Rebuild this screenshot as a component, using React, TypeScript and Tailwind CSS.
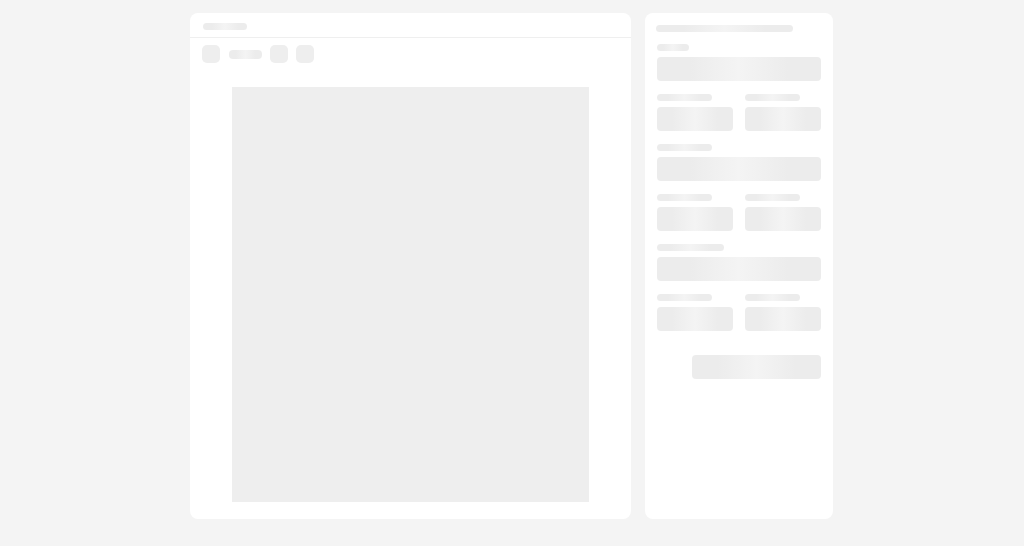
const shimmer =
  'rounded bg-[linear-gradient(90deg,#ececec_20%,#f4f4f4_50%,#ececec_80%)]';

function Bar({ className }: { className: string }) {
  return <div className={`${shimmer} shrink-0 ${className}`} />;
}

function Field({ label }: { label: string }) {
  return (
    <div className="flex flex-col gap-[6px]">
      <Bar className={`h-[7px] rounded-sm ${label}`} />
      <Bar className="h-6 w-full" />
    </div>
  );
}

function FieldPair() {
  return (
    <div className="grid grid-cols-2 gap-3">
      <Field label="w-[55px]" />
      <Field label="w-[55px]" />
    </div>
  );
}

function Square({ className = '' }: { className?: string }) {
  return <div className={`w-[18px] h-[18px] rounded-[5px] bg-[#eeeeee] shrink-0 ${className}`} />;
}

export default function App() {
  return (
    <div className="min-h-screen w-full bg-[#f4f4f4] flex justify-center gap-[14px] pt-[13px] pb-[27px] pr-px">
      <div className="w-[441px] h-[506px] bg-white rounded-lg flex flex-col">
        <div className="h-[25px] border-b border-[#efefef] px-[13px] pt-[10px]">
          <Bar className="w-11 h-[7px] rounded-sm" />
        </div>
        <div className="flex items-center px-[12px] pt-[7px]">
          <Square />
          <Bar className="w-[33px] h-[9px] ml-[9px] rounded-sm" />
          <Square className="ml-2" />
          <Square className="ml-2" />
        </div>
        <div className="flex-1 flex justify-center pt-6 pb-[17px]">
          <div className="w-[357px] h-full bg-[#eeeeee]" />
        </div>
      </div>
      <div className="w-[188px] h-[506px] bg-white rounded-lg px-3 pt-3">
        <Bar className="w-[137px] h-[7px] rounded-sm -ml-px" />
        <div className="mt-3 flex flex-col gap-[13px]">
          <Field label="w-8" />
          <FieldPair />
          <Field label="w-[55px]" />
          <FieldPair />
          <Field label="w-[67px]" />
          <FieldPair />
        </div>
        <div className="flex justify-end mt-6">
          <Bar className="w-[129px] h-6" />
        </div>
      </div>
    </div>
  );
}
